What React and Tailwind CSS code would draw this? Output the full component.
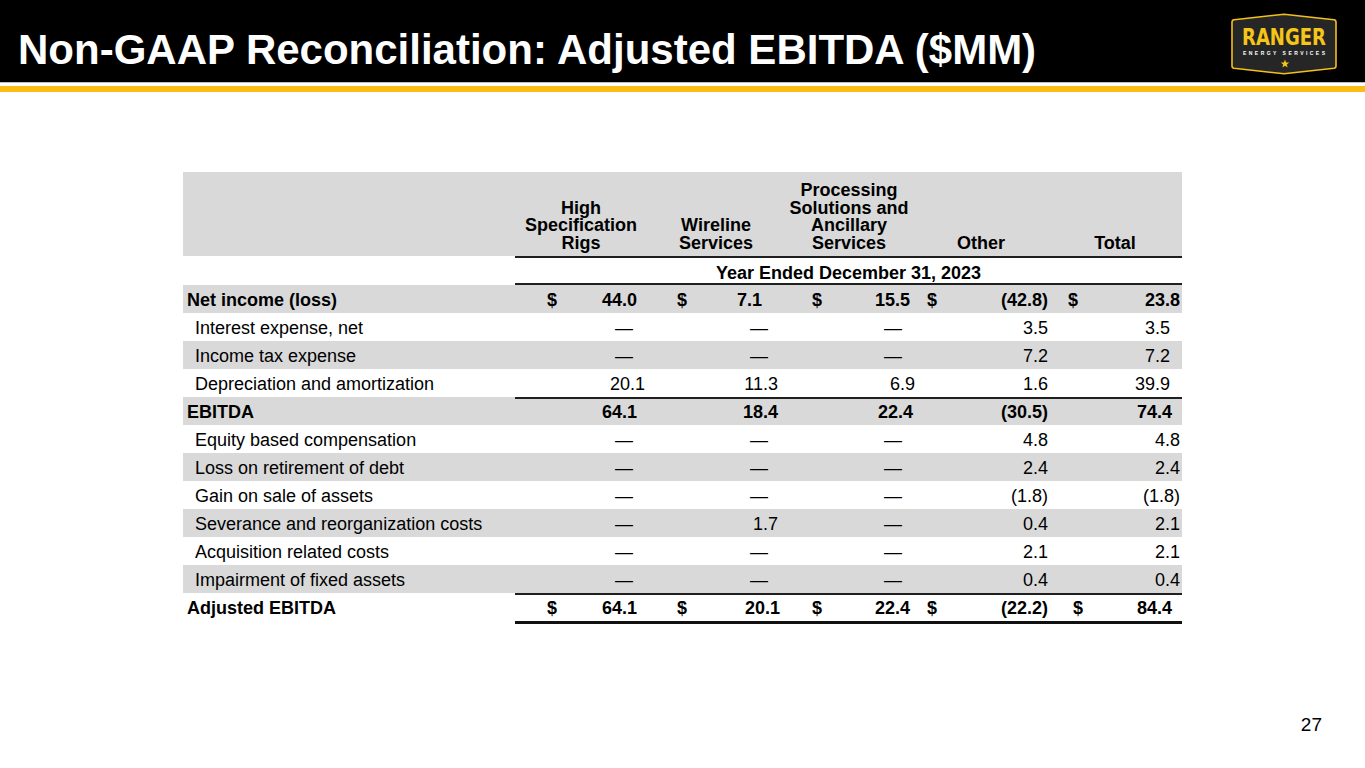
import clsx from "clsx";

// column layout of the numeric part of the table (515px -> 1182px)
const cols = [
  { w: "w-[148px]", dollar: "pl-[32px]", num: "pr-[23px]", dash: "pr-[30px]", head: "pr-[16px]" },
  { w: "w-[134px]", dollar: "pl-[14px]", num: "pr-[19px]", dash: "pr-[29px]", head: "pr-[28px]" },
  { w: "w-[128px]", dollar: "pl-[15px]", num: "pr-[12px]", dash: "pr-[23px]", head: "pr-[24px]" },
  { w: "w-[135px]", dollar: "pl-[2px]", num: "pr-[12px]", dash: "pr-[12px]", head: "pr-[23px]" },
  { w: "w-[122px]", dollar: "pl-[8px]", num: "pr-[2px]", dash: "pr-[2px]", head: "pr-[12px]" },
];

const headers = [
  ["High", "Specification", "Rigs"],
  ["Wireline", "Services"],
  ["Processing", "Solutions and", "Ancillary", "Services"],
  ["Other"],
  ["Total"],
];

const D = "—";

const rows = [
  {
    label: "Net income (loss)",
    bold: true,
    gray: true,
    dollar: true,
    values: ["44.0", "7.1", "15.5", "(42.8)", "23.8"],
    pr: ["pr-[26px]", "pr-[35px]", "pr-[15px]", null, null],
  },
  {
    label: "Interest expense, net",
    values: [D, D, D, "3.5", "3.5"],
    pr: [null, null, null, null, "pr-[12px]"],
  },
  {
    label: "Income tax expense",
    gray: true,
    values: [D, D, D, "7.2", "7.2"],
    pr: [null, null, null, null, "pr-[12px]"],
  },
  {
    label: "Depreciation and amortization",
    values: ["20.1", "11.3", "6.9", "1.6", "39.9"],
    pr: ["pr-[18px]", null, "pr-[10px]", null, "pr-[12px]"],
  },
  {
    label: "EBITDA",
    bold: true,
    gray: true,
    line: true,
    values: ["64.1", "18.4", "22.4", "(30.5)", "74.4"],
    pr: ["pr-[26px]", null, null, null, "pr-[10px]"],
  },
  { label: "Equity based compensation", values: [D, D, D, "4.8", "4.8"] },
  { label: "Loss on retirement of debt", gray: true, values: [D, D, D, "2.4", "2.4"] },
  { label: "Gain on sale of assets", values: [D, D, D, "(1.8)", "(1.8)"] },
  {
    label: "Severance and reorganization costs",
    gray: true,
    values: [D, "1.7", D, "0.4", "2.1"],
  },
  { label: "Acquisition related costs", values: [D, D, D, "2.1", "2.1"] },
  { label: "Impairment of fixed assets", gray: true, values: [D, D, D, "0.4", "0.4"] },
  {
    label: "Adjusted EBITDA",
    bold: true,
    line: true,
    total: true,
    dollar: true,
    values: ["64.1", "20.1", "22.4", "(22.2)", "84.4"],
    pr: ["pr-[26px]", "pr-[17px]", "pr-[15px]", null, "pr-[10px]"],
    dollarPl: [null, null, null, null, "pl-[13px]"],
  },
];

const RangerLogo = () => (
  <svg width="108" height="62" viewBox="0 0 108 62" className="mt-[13px] mr-[27px] shrink-0">
    <path
      d="M2 9 Q2 7 4 6.7 L54 1.2 L104 6.7 Q106 7 106 9 L106 53 Q106 55 104 55.3 L54 60.8 L4 55.3 Q2 55 2 53 Z"
      fill="#262626"
      stroke="#f2c01c"
      strokeWidth="1.6"
    />
    <text
      x="54"
      y="32"
      textAnchor="middle"
      fontFamily="'Liberation Sans Narrow', 'DejaVu Sans Condensed', 'Liberation Sans', sans-serif"
      fontWeight="bold"
      fontSize="23"
      fill="#f5c518"
      textLength="84"
      lengthAdjust="spacingAndGlyphs"
    >
      RANGER
    </text>
    <text
      x="54"
      y="42"
      textAnchor="middle"
      fontFamily="'Liberation Sans', sans-serif"
      fontWeight="bold"
      fontSize="5"
      fill="#ffffff"
      textLength="82"
      lengthAdjust="spacing"
    >
      ENERGY SERVICES
    </text>
    <polygon
      points="55,46.5 56.1,49.4 59.2,49.5 56.8,51.4 57.6,54.4 55,52.7 52.4,54.4 53.2,51.4 50.8,49.5 53.9,49.4"
      fill="#f5c518"
    />
  </svg>
);

const Row = ({ row }) => (
  <div
    className={clsx(
      "flex",
      row.total ? "h-[31px]" : "h-[28px]",
      row.gray && "bg-[#d9d9d9]"
    )}
  >
    <div
      className={clsx(
        "w-[332px] shrink-0 whitespace-nowrap pt-[3px] leading-[25px]",
        row.bold ? "pl-[4px] font-bold" : "pl-[12px]"
      )}
    >
      {row.label}
    </div>
    <div
      className={clsx(
        "flex flex-1",
        row.line && "border-t-2 border-[#1f1f1f]",
        row.total && "border-b-[3px] border-b-[#111111]",
        row.bold && "font-bold"
      )}
    >
      {row.values.map((v, i) => {
        const col = cols[i];
        const pr = (row.pr && row.pr[i]) || (v === D ? col.dash : col.num);
        const pl = (row.dollarPl && row.dollarPl[i]) || col.dollar;
        return (
          <div
            key={i}
            className={clsx(
              "flex whitespace-nowrap leading-[25px]",
              col.w,
              row.line ? "pt-[1px]" : "pt-[3px]",
              row.dollar ? "justify-between" : "justify-end"
            )}
          >
            {row.dollar && <span className={pl}>$</span>}
            <span className={pr}>{v}</span>
          </div>
        );
      })}
    </div>
  </div>
);

export default function App() {
  return (
    <div className="flex h-[768px] w-[1365px] flex-col overflow-hidden bg-white font-['Liberation_Sans',Arial,sans-serif] text-black">
      <header className="flex h-[82px] items-start justify-between bg-black">
        <h1 className="whitespace-nowrap pl-[18px] pt-[29px] text-[42px] font-bold leading-[42px] text-white">
          Non-GAAP Reconciliation: Adjusted EBITDA ($MM)
        </h1>
        <RangerLogo />
      </header>
      <div className="h-[1px] bg-[#bdbdbd]" />
      <div className="h-[3px]" />
      <div className="h-[6px] bg-[#fbbd14]" />

      <main className="mx-auto mt-[80px] w-[999px] text-[18px]">
        {/* column headings */}
        <div className="flex h-[84px] bg-[#d9d9d9]">
          <div className="w-[332px] shrink-0" />
          {headers.map((lines, i) => (
            <div
              key={i}
              className={clsx(
                "flex flex-col items-center justify-end pb-[4px] text-center font-bold leading-[17.5px]",
                cols[i].w,
                cols[i].head
              )}
            >
              {lines.map((l) => (
                <div key={l} className="whitespace-nowrap">
                  {l}
                </div>
              ))}
            </div>
          ))}
        </div>

        <div className="flex h-[29px]">
          <div className="w-[332px] shrink-0" />
          <div className="flex-1 border-y-2 border-[#1f1f1f] pt-[5px] text-center font-bold leading-[20px]">
            Year Ended December 31, 2023
          </div>
        </div>

        {rows.map((r) => (
          <Row key={r.label} row={r} />
        ))}
      </main>

      <div className="flex-1" />
      <footer className="pb-[34px] pr-[43px] text-right text-[19px] leading-[19px]">27</footer>
    </div>
  );
}
